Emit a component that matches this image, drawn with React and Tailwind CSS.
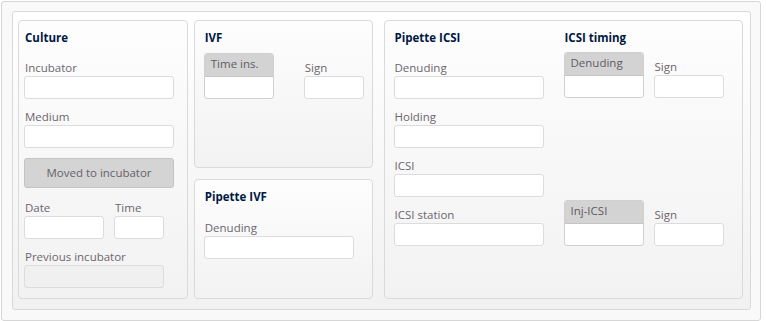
const font = { fontFamily: '"Open Sans", "Noto Sans", sans-serif' };

function Label({ children, className = "" }) {
  return (
    <div className={"h-[17px] pt-[1px] leading-[16px] text-[11.5px] text-[#6b666e] " + className}>
      {children}
    </div>
  );
}

function Input({ className = "", disabled }) {
  return (
    <div
      className={
        "h-[23px] rounded-[3px] border border-[#dcdcdc] " +
        (disabled ? "bg-[#f0f0f0] " : "bg-white ") +
        className
      }
    />
  );
}

function Field({ label, className = "", w = "w-[150px]", disabled }) {
  return (
    <div className={className}>
      <Label className="pl-[1px]">{label}</Label>
      <Input className={w} disabled={disabled} />
    </div>
  );
}

function Title({ children }) {
  return (
    <div className="h-[16px] pl-[1px] leading-[15px] text-[11.5px] font-bold text-[#001844]">
      {children}
    </div>
  );
}

function TimeBox({ label, w = "w-[70px]" }) {
  return (
    <div
      className={
        "h-[46px] flex flex-col rounded-[3px] border border-[#d0d0d0] overflow-hidden bg-white " + w
      }
    >
      <div className="h-[23px] bg-[#d3d3d3] border-b border-[#c6c6c6] pl-[6px] pt-[2px] leading-[16px] text-[11.5px] text-[#5f5b63]">
        {label}
      </div>
    </div>
  );
}

function SignField({ w }) {
  return (
    <div className="pt-[6px]">
      <Label className="pl-[1px]">Sign</Label>
      <Input className={w} />
    </div>
  );
}

function Panel({ children, className = "" }) {
  return (
    <div
      className={
        "rounded-[4px] border border-[#dadada] bg-gradient-to-b from-[#fdfdfd] to-[#f2f2f2] " +
        className
      }
    >
      {children}
    </div>
  );
}

export default function App() {
  return (
    <div className="w-[766px] h-[321px] bg-white overflow-hidden" style={font}>
      <div className="ml-[1px] mt-[1px] w-[760px] h-[320px] rounded-[3px] border border-[#d6d6d6] bg-[#f9f9f9] pl-[10px] pt-[9px] pr-[9px] pb-[9px]">
        <div className="h-[299px] rounded-[3px] border border-[#d9d9d9] bg-gradient-to-b from-white to-[#f1f1f1] flex pl-[5px] pt-[8px] pr-[7px] pb-[10px]">
          {/* Culture */}
          <Panel className="w-[170px] pl-[5px] pt-[9px]">
            <Title>Culture</Title>
            <Field label="Incubator" className="mt-[13px]" />
            <Field label="Medium" className="mt-[9px]" />
            <button className="mt-[10px] w-[150px] h-[30px] rounded-[3px] border border-[#c4c4c4] bg-[#d4d4d4] text-[11.5px] text-[#66626a]">
              Moved to incubator
            </button>
            <div className="mt-[11px] flex gap-[10px]">
              <Field label="Date" w="w-[80px]" />
              <Field label="Time" w="w-[50px]" />
            </div>
            <Field label="Previous incubator" className="mt-[9px]" w="w-[140px]" disabled />
          </Panel>

          {/* IVF column */}
          <div className="ml-[6px] w-[179px] flex flex-col">
            <Panel className="h-[148px] pl-[9px] pt-[9px]">
              <Title>IVF</Title>
              <div className="mt-[7px] flex gap-[30px]">
                <TimeBox label="Time ins." />
                <SignField w="w-[60px]" />
              </div>
            </Panel>
            <Panel className="mt-[11px] flex-1 pl-[9px] pt-[9px]">
              <Title>Pipette IVF</Title>
              <Field label="Denuding" className="mt-[14px]" />
            </Panel>
          </div>

          {/* ICSI */}
          <Panel className="ml-[11px] w-[360px] pl-[9px] pt-[9px] flex">
            <div className="w-[170px]">
              <Title>Pipette ICSI</Title>
              <Field label="Denuding" className="mt-[13px]" />
              <Field label="Holding" className="mt-[9px]" />
              <Field label="ICSI" className="mt-[9px]" />
              <Field label="ICSI station" className="mt-[9px]" />
            </div>
            <div>
              <Title>ICSI timing</Title>
              <div className="mt-[6px] flex gap-[10px]">
                <TimeBox label="Denuding" w="w-[80px]" />
                <SignField w="w-[70px]" />
              </div>
              <div className="mt-[102px] flex gap-[10px]">
                <TimeBox label="Inj-ICSI" w="w-[80px]" />
                <SignField w="w-[70px]" />
              </div>
            </div>
          </Panel>
        </div>
      </div>
    </div>
  );
}
